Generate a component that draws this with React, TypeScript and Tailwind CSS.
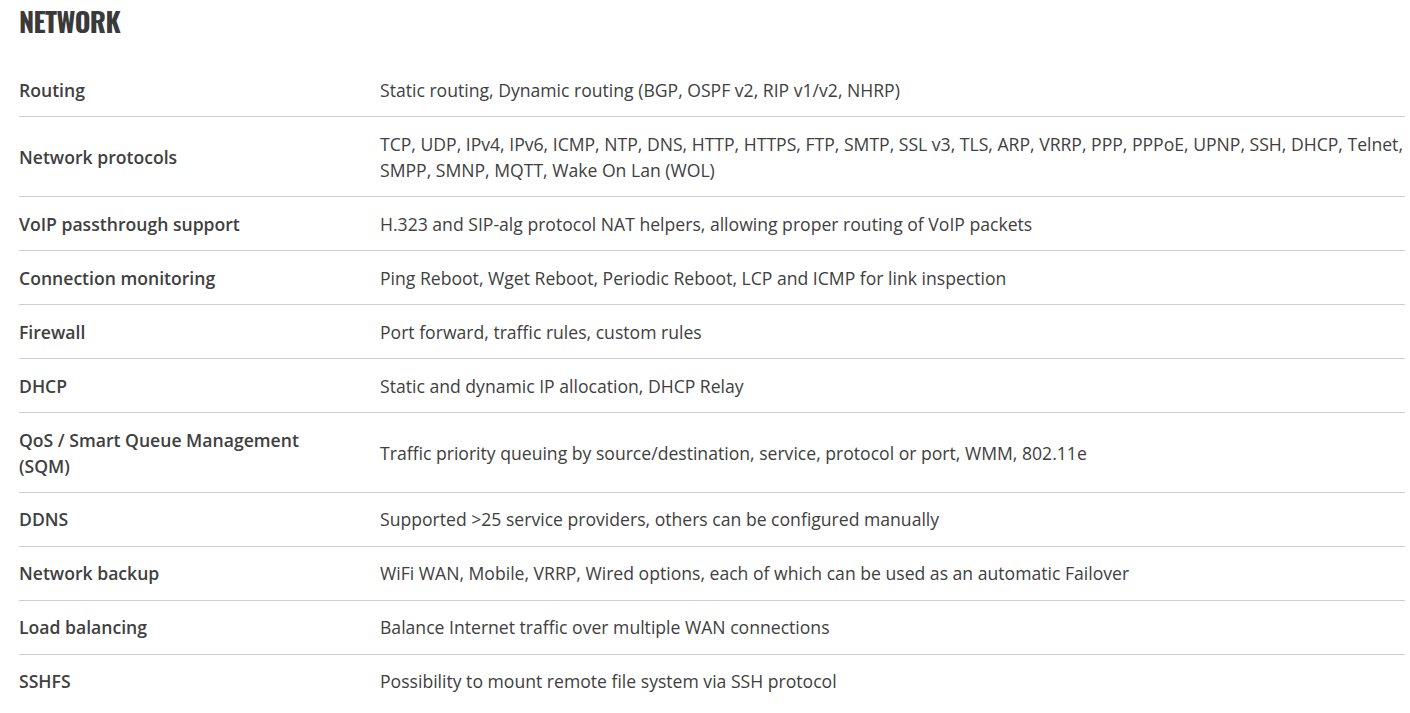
const rows = [
  { label: 'Routing', value: 'Static routing, Dynamic routing (BGP, OSPF v2, RIP v1/v2, NHRP)' },
  {
    label: 'Network protocols',
    value:
      'TCP, UDP, IPv4, IPv6, ICMP, NTP, DNS, HTTP, HTTPS, FTP, SMTP, SSL v3, TLS, ARP, VRRP, PPP, PPPoE, UPNP, SSH, DHCP, Telnet, SMPP, SMNP, MQTT, Wake On Lan (WOL)',
  },
  { label: 'VoIP passthrough support', value: 'H.323 and SIP-alg protocol NAT helpers, allowing proper routing of VoIP packets' },
  { label: 'Connection monitoring', value: 'Ping Reboot, Wget Reboot, Periodic Reboot, LCP and ICMP for link inspection' },
  { label: 'Firewall', value: 'Port forward, traffic rules, custom rules' },
  { label: 'DHCP', value: 'Static and dynamic IP allocation, DHCP Relay' },
  {
    label: 'QoS / Smart Queue Management (SQM)',
    value: 'Traffic priority queuing by source/destination, service, protocol or port, WMM, 802.11e',
  },
  { label: 'DDNS', value: 'Supported >25 service providers, others can be configured manually' },
  { label: 'Network backup', value: 'WiFi WAN, Mobile, VRRP, Wired options, each of which can be used as an automatic Failover' },
  { label: 'Load balancing', value: 'Balance Internet traffic over multiple WAN connections' },
  { label: 'SSHFS', value: 'Possibility to mount remote file system via SSH protocol' },
];

export default function App() {
  return (
    <div className="min-h-screen bg-white pl-[19px] pr-[5px] text-[#404040] font-['Open_Sans',sans-serif]">
      <h2 className="pt-[6px] h-[63px] text-[27px] leading-[30px] font-bold uppercase tracking-[-0.6px] text-[#3a3a3a] font-['Oswald','Liberation_Sans_Narrow','DejaVu_Sans_Condensed',sans-serif] [font-stretch:condensed]">
        Network
      </h2>

      <div className="flex flex-col">
        {rows.map((row, i) => (
          <div
            key={row.label}
            className={
              'grid grid-cols-[361px_1fr] items-center pt-[13.6px] pb-[13.4px] text-[17.6px] leading-[26px] ' +
              (i < rows.length - 1 ? 'border-b border-[#cfcfcf]' : '')
            }
          >
            <div className="pr-[30px] font-semibold">{row.label}</div>
            <div>{row.value}</div>
          </div>
        ))}
      </div>
    </div>
  );
}
